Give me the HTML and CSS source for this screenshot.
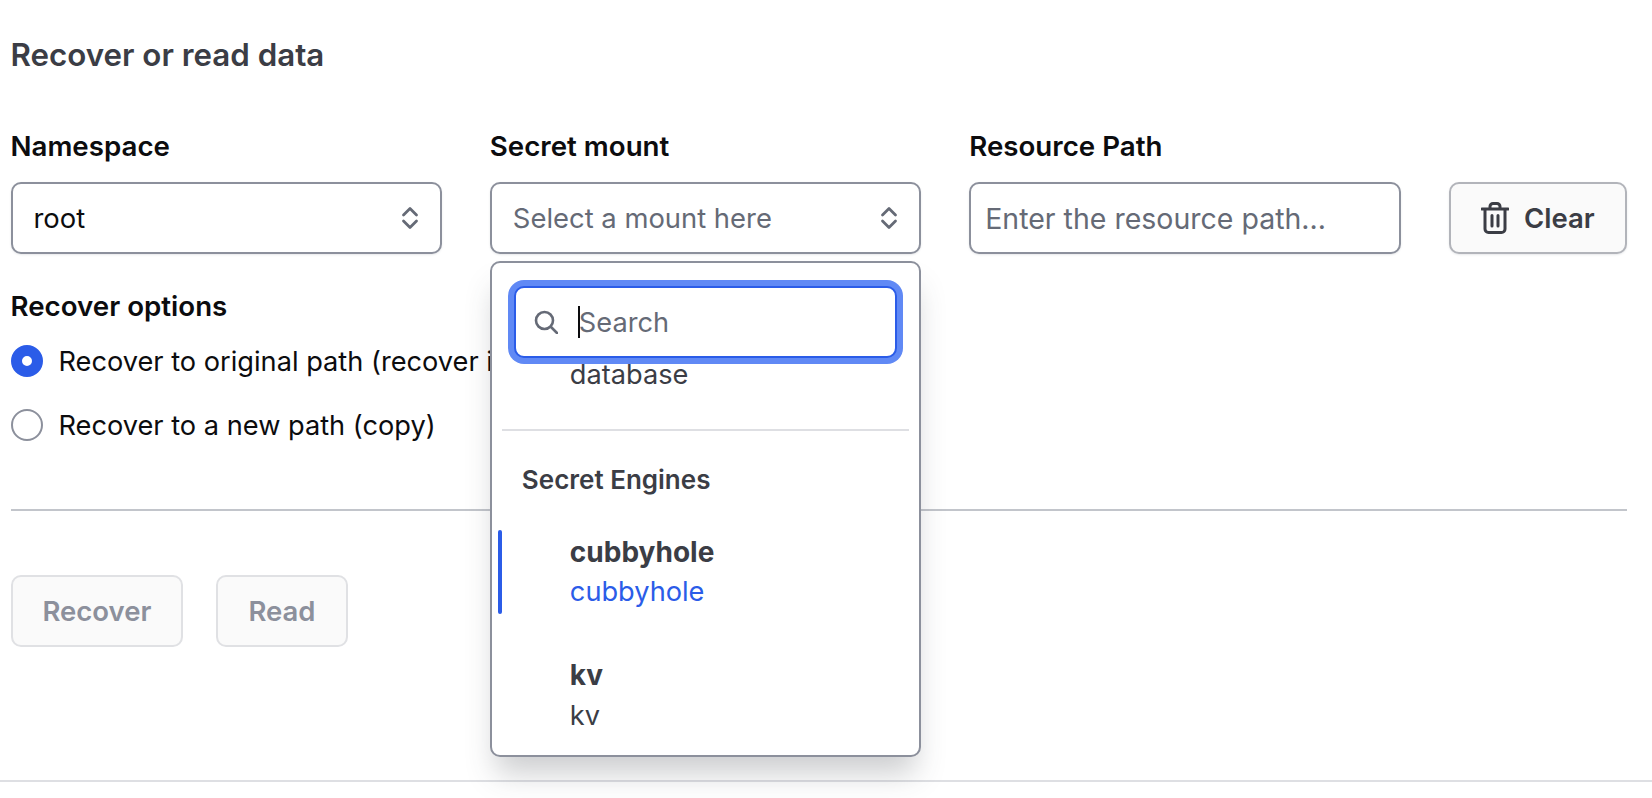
FILE: index.html
```html
<!DOCTYPE html>
<html>
<head>
	<meta charset='utf-8'>
	<title>Recover or read data</title>
	<link rel="stylesheet" href="styles.css">
</head>
<body>

	<div class="section">
		<h2 class="title">Recover or read data</h2>

		<div class="fields">
			<div class="field">
				<label class="label">Namespace</label>
				<div class="select">
					<span>root</span>
					<svg class="unfold" viewBox="0 0 18 24"><path d="M2.500 9 9 2.500 15.500 9M2.500 15 9 21.500 15.500 15"/></svg>
				</div>
			</div>

			<div class="field">
				<label class="label">Secret mount</label>
				<div class="select placeholder">
					<span>Select a mount here</span>
					<svg class="unfold" viewBox="0 0 18 24"><path d="M2.500 9 9 2.500 15.500 9M2.500 15 9 21.500 15.500 15"/></svg>
				</div>

				<!-- open dropdown, sits over the options and divider -->
				<div class="menu">
					<div class="search">
						<svg class="search-icon" viewBox="0 0 24 24"><circle cx="10.500" cy="10.500" r="8.500"/><path d="m17 17 6 6"/></svg>
						<span class="caret"></span>
						<input type="text" placeholder="Search">
					</div>
					<div class="item-sub first">database</div>
					<div class="menu-line"></div>
					<div class="group">Secret Engines</div>
					<div class="item active">
						<div class="item-name">cubbyhole</div>
						<div class="item-sub">cubbyhole</div>
					</div>
					<div class="item">
						<div class="item-name">kv</div>
						<div class="item-sub">kv</div>
					</div>
				</div>
			</div>

			<div class="field">
				<label class="label">Resource Path</label>
				<input class="path" type="text" placeholder="Enter the resource path...">
			</div>

			<button class="btn clear">
				<svg class="trash" viewBox="0 0 28 32"><path d="M1 7h26M9 7V4.500a3 3 0 0 1 3-3h4a3 3 0 0 1 3 3V7M4 7v20a3.500 3.500 0 0 0 3.500 3.500h13A3.500 3.500 0 0 0 24 27V7M11 13.500v10.500M17 13.500v10.500"/></svg>
				Clear
			</button>
		</div>

		<div class="options">
			<div class="label">Recover options</div>
			<div class="option">
				<span class="radio checked"></span>
				<span>Recover to original path (recover in place)</span>
			</div>
			<div class="option">
				<span class="radio"></span>
				<span>Recover to a new path (copy)</span>
			</div>
		</div>

		<hr class="line">

		<div class="actions">
			<button class="btn" disabled>Recover</button>
			<button class="btn" disabled>Read</button>
		</div>
	</div>

	<hr class="bottom-line">

</body>
</html>
```

FILE: styles.css
```css
html, body{
	margin: 0;
	height: 798px;
	overflow: hidden;
	background-color: #fff;
}
body{
	font-family: Inter, "Liberation Sans", sans-serif;
	font-size: 27.2px;
	color: #0c0c0e;
}
.section{
	padding: 0 25px 0 10.500px;
}
.title{
	margin: 0;
	padding-top: 38px;
	height: 56px;
	line-height: 34px;
	font-size: 31.3px;
	font-weight: 600;
	color: #3b3d45;
}
.fields{
	display: flex;
	align-items: flex-end;
	gap: 48px;
	margin-top: 35px;
}
.field{
	position: relative;
	width: 431.500px;
}
.label{
	display: block;
	font-size: 27.700px;
	font-weight: 600;
	line-height: 34px;
	margin-bottom: 19px;
}
.select, .path{
	box-sizing: border-box;
	width: 100%;
	height: 72px;
	border: 2px solid #8c909c;
	border-radius: 10px;
	background-color: #fff;
	box-shadow: 0 1px 2px rgba(101, 106, 118, 0.15);
}
.select{
	display: flex;
	align-items: center;
	justify-content: space-between;
	padding: 0 21px;
	font-size: 27.4px;
}
.placeholder{
	color: #656a76;
}
.unfold{
	width: 18px;
	height: 24px;
	fill: none;
	stroke: #656a76;
	stroke-width: 2.800;
	stroke-linecap: round;
	stroke-linejoin: round;
}
.path{
	padding: 0 14px;
	font-family: inherit;
	font-size: 28.5px;
	outline: none;
}
input::placeholder{
	color: #656a76;
	opacity: 1;
}
.btn{
	box-sizing: border-box;
	height: 72px;
	padding: 0 30px;
	display: inline-flex;
	align-items: center;
	border: 2px solid #b2b4ba;
	border-radius: 10px;
	background-color: #fafafa;
	color: #3b3d45;
	font-family: inherit;
	font-size: 27.5px;
	font-weight: 600;
	box-shadow: 0 1px 2px rgba(101, 106, 118, 0.15);
}
.btn:disabled{
	border-color: #e0e1e4;
	color: #8c909c;
	box-shadow: none;
}
.clear{
	width: 178.500px;
	padding: 0;
	justify-content: center;
	gap: 15px;
}
.trash{
	width: 28px;
	height: 32px;
	fill: none;
	stroke: #3b3d45;
	stroke-width: 3;
	stroke-linecap: round;
	stroke-linejoin: round;
}

.options{
	margin-top: 35px;
}
.options .label{
	margin-bottom: 0;
}
.option{
	display: flex;
	align-items: center;
	gap: 16px;
	height: 34px;
	margin-top: 30px;
	white-space: nowrap;
}
.options .label + .option{
	margin-top: 21px;
}
.radio{
	flex: none;
	box-sizing: border-box;
	width: 32px;
	height: 32px;
	border: 2px solid #8c909c;
	border-radius: 50%;
	background-color: #fff;
}
.radio.checked{
	border: 11px solid #2b5ce8;
}

.line{
	margin: 67px 0 0;
	border: none;
	border-top: 2px solid #c2c5cb;
}
.actions{
	display: flex;
	gap: 33px;
	margin-top: 64px;
}
.bottom-line{
	margin: 133px 0 0;
	border: none;
	border-top: 2px solid #dedfe3;
}

/* dropdown */
.menu{
	position: absolute;
	top: 132px;
	left: 0;
	z-index: 2;
	box-sizing: border-box;
	width: 100%;
	height: 496px;
	overflow: hidden;
	border: 2px solid #8c909c;
	border-radius: 10px;
	background-color: #fff;
	color: #3b3d45;
	box-shadow: 0 22px 30px -6px rgba(59, 61, 69, 0.26);
}
.search{
	position: relative;
	z-index: 1;
	box-sizing: border-box;
	display: flex;
	align-items: center;
	height: 72px;
	margin: 23px 22px 0;
	padding: 0 18px;
	border: 2px solid #2b5ce8;
	border-radius: 10px;
	background-color: #fff;
	box-shadow: 0 0 0 6px #6089f5;
}
.search-icon{
	flex: none;
	width: 24px;
	height: 24px;
	fill: none;
	stroke: #656a76;
	stroke-width: 2.600;
	stroke-linecap: round;
}
.caret{
	flex: none;
	width: 2px;
	height: 32px;
	margin: 0 -1px 0 20px;
	background-color: #0c0c0e;
}
.search input{
	flex: 1;
	min-width: 0;
	padding: 0;
	border: none;
	outline: none;
	background: transparent;
	font: inherit;
}
.item-sub{
	line-height: 40px;
}
.first{
	margin-left: 78px;
	line-height: 34px;
}
.menu-line{
	height: 2px;
	margin: 37px 10px 0;
	background-color: #dedfe3;
}
.group{
	margin: 33px 0 0 30px;
	font-size: 26px;
	font-weight: 600;
	line-height: 32px;
}
.item{
	position: relative;
	margin-top: 36px;
	padding-left: 78px;
	height: 84px;
}
.item + .item{
	margin-top: 39px;
}
.item + .item .item-sub{
	line-height: 42px;
}
.item-name{
	font-size: 28px;
	font-weight: 700;
	line-height: 40px;
}
.active .item-sub{
	color: #2b5ce8;
}
.active::before{
	content: "";
	position: absolute;
	left: 6px;
	top: -2px;
	width: 4px;
	height: 84px;
	border-radius: 2px;
	background-color: #2b5ce8;
}
```
